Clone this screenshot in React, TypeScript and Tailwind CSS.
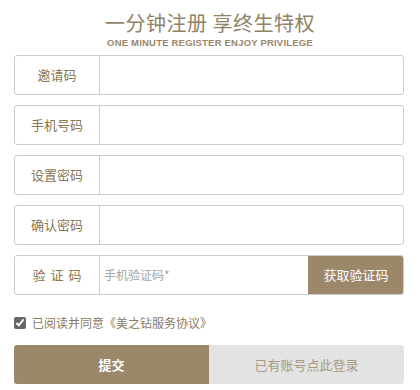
import { useState } from 'react'

const font = { fontFamily: '"Microsoft YaHei", "Noto Sans CJK SC", "Liberation Sans", sans-serif' }

const fields = [
  { label: '邀请码', placeholder: '' },
  { label: '手机号码', placeholder: '' },
  { label: '设置密码', placeholder: '', type: 'password' },
  { label: '确认密码', placeholder: '', type: 'password' },
]

export default function App() {
  const [agree, setAgree] = useState(true)

  return (
    <div className="w-[420px] h-[390px] bg-white" style={font}>
      {/* Title */}
      <div className="pt-[10px] text-center text-[#928268]">
        <h1 className="text-[20px] leading-[26px] tracking-[0.5px]">一分钟注册 享终生特权</h1>
        <p
          className="mt-[1px] text-[9.5px] leading-[11px] font-bold uppercase tracking-[0.2px] text-[#9a8769]"
          style={{ fontFamily: '"Liberation Sans", Arial, sans-serif' }}
        >
          One minute register enjoy privilege
        </p>
      </div>

      <div className="ml-[14px] mt-[7px] flex w-[390px] flex-col gap-[10px]">
        {fields.map(f => (
          <div key={f.label} className="flex h-[40px] rounded-[3px] border border-[#cccccc]">
            <div className="flex w-[85px] shrink-0 items-center justify-center border-r border-[#cccccc] text-[13px] text-[#8a7552]">
              {f.label}
            </div>
            <input
              type={f.type ?? 'text'}
              className="min-w-0 flex-1 px-2 text-[13px] outline-none"
              placeholder={f.placeholder}
            />
          </div>
        ))}

        {/* Verify code */}
        <div className="flex h-[40px] rounded-[3px] border border-[#cccccc] overflow-hidden">
          <div className="flex w-[85px] shrink-0 items-center justify-center border-r border-[#cccccc] text-[13px] tracking-[5px] pl-[5px] text-[#8a7552]">
            验证码
          </div>
          <input
            className="min-w-0 flex-1 px-[4px] text-[12px] outline-none placeholder:text-[#a5a5a5]"
            placeholder="手机验证码*"
          />
          <button className="-my-px -mr-px w-[96px] rounded-r-[3px] bg-[#9b8769] text-[13px] text-white">
            获取验证码
          </button>
        </div>
      </div>

      {/* Agreement */}
      <label className="ml-[14px] mt-[19px] flex items-center gap-[6px] text-[12px] text-[#8a7a5f]">
        <input
          type="checkbox"
          checked={agree}
          onChange={e => setAgree(e.target.checked)}
          className="m-0 h-[12px] w-[12px] accent-[#666666]"
        />
        <span>已阅读并同意《美之钻服务协议》</span>
      </label>

      {/* Buttons */}
      <div className="ml-[14px] mt-[13px] flex h-[39px] w-[390px] overflow-hidden rounded-[3px]">
        <button className="flex-1 bg-[#9b8769] text-[13px] font-bold text-white">提交</button>
        <button className="flex-1 bg-[#e3e3e3] text-[13px] text-[#a99a82]">已有账号点此登录</button>
      </div>
    </div>
  )
}
